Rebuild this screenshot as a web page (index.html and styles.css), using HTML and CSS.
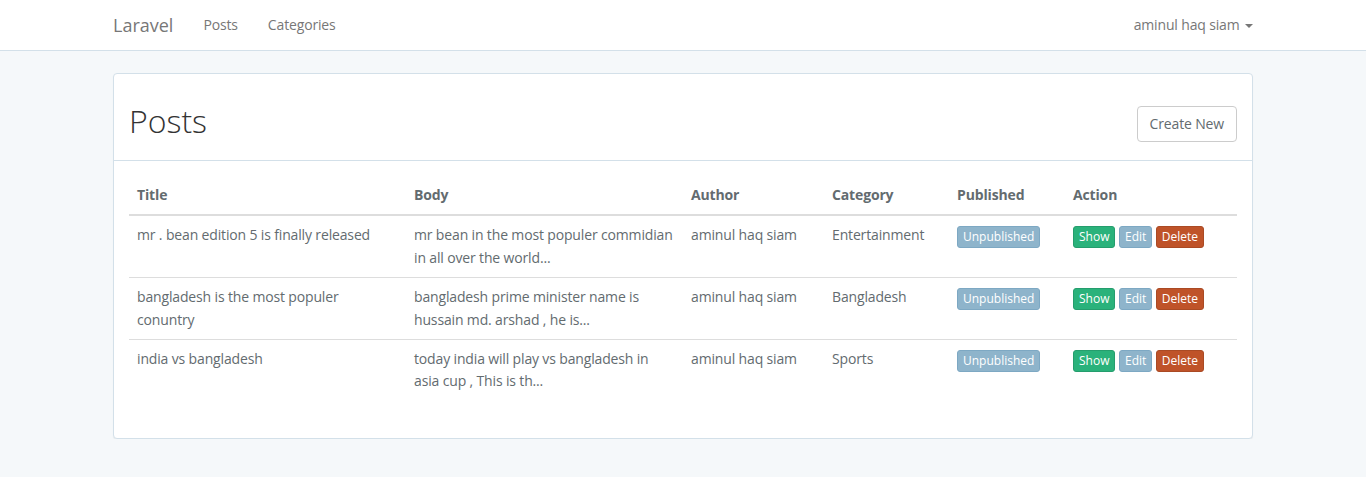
FILE: index.html
```html
<!DOCTYPE html>
<html>
<head>
<meta charset="utf-8">
<title>Laravel</title>
<link rel="stylesheet" href="styles.css">
</head>
<body>
<nav class="navbar">
  <div class="container nav-inner">
    <div class="nav-left">
      <a class="brand" href="#">Laravel</a>
      <a class="nav-link" href="#">Posts</a>
      <a class="nav-link" href="#">Categories</a>
    </div>
    <a class="nav-link user" href="#">aminul haq siam <span class="caret"></span></a>
  </div>
</nav>
<main class="container">
  <section class="panel">
    <header class="panel-heading">
      <h1 class="title">Posts</h1>
      <a class="btn btn-default" href="#">Create New</a>
    </header>
    <div class="panel-body">
      <table class="table">
        <colgroup>
          <col class="c-title"><col class="c-body"><col class="c-author"><col class="c-cat"><col class="c-pub"><col class="c-act">
        </colgroup>
        <thead>
          <tr><th>Title</th><th>Body</th><th>Author</th><th>Category</th><th>Published</th><th>Action</th></tr>
        </thead>
        <tbody>
          <tr>
            <td>mr . bean edition 5 is finally released</td>
            <td>mr bean in the most populer commidian in all over the world...</td>
            <td>aminul haq siam</td>
            <td>Entertainment</td>
            <td><span class="btn btn-xs btn-info">Unpublished</span></td>
            <td><a class="btn btn-xs btn-success" href="#">Show</a> <a class="btn btn-xs btn-info" href="#">Edit</a> <a class="btn btn-xs btn-danger" href="#">Delete</a></td>
          </tr>
          <tr>
            <td>bangladesh is the most populer conuntry</td>
            <td>bangladesh prime minister name is hussain md. arshad , he is...</td>
            <td>aminul haq siam</td>
            <td>Bangladesh</td>
            <td><span class="btn btn-xs btn-info">Unpublished</span></td>
            <td><a class="btn btn-xs btn-success" href="#">Show</a> <a class="btn btn-xs btn-info" href="#">Edit</a> <a class="btn btn-xs btn-danger" href="#">Delete</a></td>
          </tr>
          <tr>
            <td>india vs bangladesh</td>
            <td>today india will play vs bangladesh in asia cup , This is th...</td>
            <td>aminul haq siam</td>
            <td>Sports</td>
            <td><span class="btn btn-xs btn-info">Unpublished</span></td>
            <td><a class="btn btn-xs btn-success" href="#">Show</a> <a class="btn btn-xs btn-info" href="#">Edit</a> <a class="btn btn-xs btn-danger" href="#">Delete</a></td>
          </tr>
        </tbody>
      </table>
    </div>
  </section>
</main>
</body>
</html>
```

FILE: styles.css
```css
* { box-sizing: border-box; }
html, body { margin: 0; }
body {
  background: #f5f8fa;
  font-family: "Open Sans", "Liberation Sans", sans-serif;
  font-size: 14px;
  line-height: 1.6;
  color: #636b6f;
  letter-spacing: -0.15px;
}
a { text-decoration: none; }
.container {
  width: 1170px;
  margin: 0 auto;
  padding: 0 15px;
}
.navbar {
  background: #fff;
  border-bottom: 1px solid #d3e0e9;
  height: 51px;
  margin-bottom: 22px;
}
.nav-inner {
  display: flex;
  justify-content: space-between;
  align-items: center;
  height: 50px;
}
.nav-left { display: flex; align-items: center; }
.brand {
  font-size: 18px;
  line-height: 20px;
  color: #777;
  padding: 15px 15px 15px 0;
  letter-spacing: 0;
}
.nav-link {
  font-size: 14px;
  line-height: 20px;
  color: #777;
  padding: 15px;
}
.nav-link.user { padding-right: 0; }
.caret {
  display: inline-block;
  width: 0; height: 0;
  margin-left: 2px;
  vertical-align: middle;
  border-top: 4px solid #777;
  border-left: 4px solid transparent;
  border-right: 4px solid transparent;
}
.panel {
  background: #fff;
  border: 1px solid #d3e0e9;
  border-radius: 4px;
  box-shadow: 0 1px 1px rgba(0,0,0,.05);
}
.panel-heading {
  display: flex;
  justify-content: space-between;
  align-items: center;
  padding: 24px 15px 16px;
  border-bottom: 1px solid #d3e0e9;
  color: #333;
}
.title {
  margin: 0;
  font-size: 32px;
  font-weight: 300;
  line-height: 46px;
  color: #333;
  letter-spacing: 0;
}
.btn {
  display: inline-block;
  border: 1px solid transparent;
  border-radius: 4px;
  text-align: center;
  white-space: nowrap;
  vertical-align: middle;
}
.btn-default {
  padding: 6px 12px;
  font-size: 14px;
  line-height: 22px;
  color: #636b6f;
  background: #fff;
  border-color: #ccc;
  align-self: flex-end;
  margin-bottom: 2px;
}
.panel-body { padding: 15px; }
.table {
  width: 100%;
  border-collapse: collapse;
  table-layout: fixed;
  margin-bottom: 22px;
}
.c-title { width: 277px; }
.c-body { width: 277px; }
.c-author { width: 141px; }
.c-cat { width: 125px; }
.c-pub { width: 116px; }
.c-act { width: 172px; }
.table th {
  text-align: left;
  font-weight: 700;
  padding: 8px;
  line-height: 1.6;
  border-bottom: 2px solid #ddd;
  vertical-align: bottom;
}
.table td {
  padding: 8px;
  line-height: 1.6;
  vertical-align: top;
  border-top: 1px solid #ddd;
}
.table tbody tr:first-child td { border-top: 0; }
.btn-xs {
  padding: 1px 5px;
  font-size: 12px;
  line-height: 18px;
  border-radius: 3px;
  color: #fff;
  margin-top: 1px;
  letter-spacing: 0;
}
.btn-info { background: #8eb4cb; border-color: #7da8c3; }
.btn-success { background: #2ab27b; border-color: #259d6d; }
.btn-danger { background: #bf5329; border-color: #aa4a24; }
```
